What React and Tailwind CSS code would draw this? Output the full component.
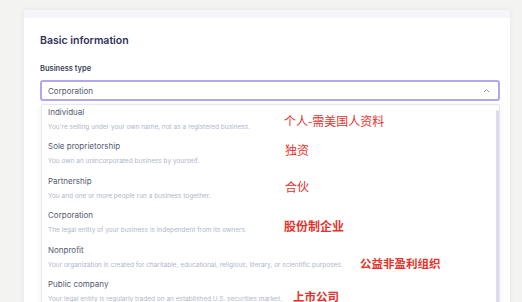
import React from 'react';

const options = [
  { title: 'Individual', desc: "You're selling under your own name, not as a registered business." },
  { title: 'Sole proprietorship', desc: 'You own an unincorporated business by yourself.' },
  { title: 'Partnership', desc: 'You and one or more people run a business together.' },
  { title: 'Corporation', desc: 'The legal entity of your business is independent from its owners.' },
  { title: 'Nonprofit', desc: 'Your organization is created for charitable, educational, religious, literary, or scientific purposes.' },
  { title: 'Public company', desc: 'Your legal entity is regularly traded on an established U.S. securities market.' },
];

const notes = [
  { text: '个人-需美国人资料', x: 284, y: 113, cls: 'text-[12px] font-normal' },
  { text: '独资', x: 285, y: 142, cls: 'text-[12px] font-normal' },
  { text: '合伙', x: 285, y: 179, cls: 'text-[12px] font-normal' },
  { text: '股份制企业', x: 284, y: 218, cls: 'text-[12px] font-semibold' },
  { text: '公益非盈利组织', x: 360, y: 255, cls: 'text-[11.5px] font-semibold' },
  { text: '上市公司', x: 293, y: 288, cls: 'text-[11.5px] font-semibold' },
];

export default function App() {
  return (
    <div
      className="relative w-[522px] h-[302px] overflow-hidden bg-[#f3f3f2] pt-[10px] pl-[24px]"
      style={{ fontFamily: 'Inter, "Noto Sans", sans-serif' }}
    >
      <div className="w-[486px] h-[320px] bg-white shadow-[0_0_6px_rgba(0,0,0,0.06)]">
        <div className="h-[8px] bg-[#f6f6fa]" />
        <div className="pl-[16px] pr-[10px] pt-[16px]">
          <h2 className="text-[10.5px] leading-[14px] font-semibold text-[#32325d]">Basic information</h2>
          <div className="mt-[16px] text-[7.5px] leading-[10px] font-semibold text-[#3c4257]">Business type</div>
          <div className="mt-[6px] h-[21px] flex items-center justify-between rounded-[3px] border-2 border-[#b0a6f2] pl-[6px] pr-[8px]">
            <span className="text-[8px] text-[#4f566b]">Corporation</span>
            <svg width="7" height="5" viewBox="0 0 7 5" fill="none">
              <path d="M1 4 L3.5 1.5 L6 4" stroke="#8792a2" strokeWidth="1" />
            </svg>
          </div>
          <div className="relative mt-[3px] ml-[1px] rounded-[2px] border border-[#e6e8ef] bg-white shadow-[0_2px_6px_rgba(50,50,93,0.08)]">
            <div className="absolute right-0 top-[5px] h-[300px] w-[3px] rounded-full bg-[#dcdceb]" />
            {options.map((o) => (
              <div key={o.title} className="pl-[6px] pt-[2px] pb-[7.4px]">
                <div className="text-[8px] leading-[11px] text-[#525a70]">{o.title}</div>
                <div className="mt-[5px] text-[6.5px] leading-[9px] text-[#b0b5cc] whitespace-nowrap">{o.desc}</div>
              </div>
            ))}
          </div>
        </div>
      </div>
      {notes.map((n) => (
        <div
          key={n.text}
          className={`absolute leading-[16px] text-[#e5322b] ${n.cls}`}
          style={{ left: n.x, top: n.y, fontFamily: '"Noto Sans CJK SC", sans-serif' }}
        >
          {n.text}
        </div>
      ))}
    </div>
  );
}
